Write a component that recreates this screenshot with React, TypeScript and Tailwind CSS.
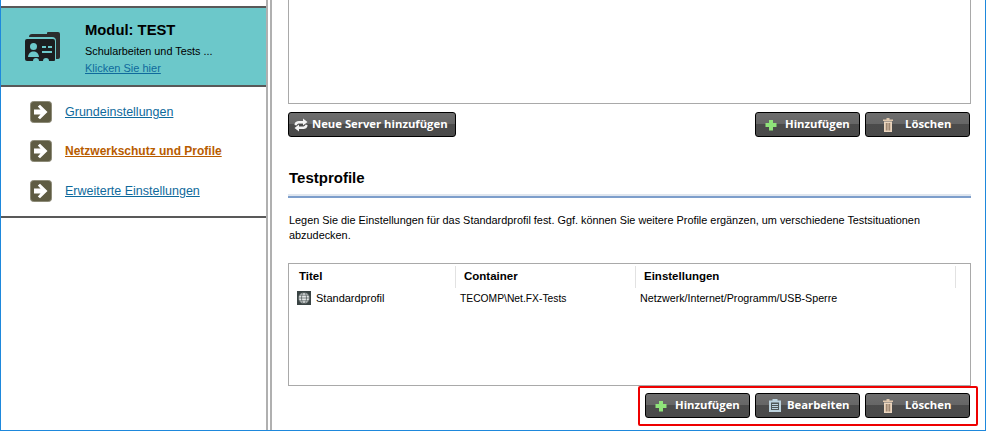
import type { ReactNode } from "react";

const sans = "font-['Liberation_Sans',Arial,sans-serif]";

function ArrowTile() {
  return (
    <svg width="22" height="22" viewBox="0 0 22 22" className="shrink-0">
      <rect x="0.5" y="0.5" width="21" height="21" rx="3" fill="#5f5c43" stroke="#8d8b78" />
      <path d="M4 8.500h6.500L7.800 5.600 10 3.800 17.500 11 10 18.200l-2.200-1.800 2.700-2.900H4z" fill="#fff" />
    </svg>
  );
}

function ModuleIcon() {
  return (
    <svg width="36" height="30" viewBox="0 0 36 30" className="shrink-0">
      <path d="M4 5a3 3 0 0 1 3-3h15V1a1 1 0 0 1 1-1h10a2 2 0 0 1 2 2v23a2 2 0 0 1-2 2h-2V9a4 4 0 0 0-4-4z" fill="#2b2d2e" />
      <path d="M2 7h26a2 2 0 0 1 2 2v19a1 1 0 0 1-1 1H24a3 3 0 0 0-6 0h-4a3 3 0 0 0-6 0H2a2 2 0 0 1-2-2V9a2 2 0 0 1 2-2z" fill="#1c1e20" />
      <circle cx="8.500" cy="14.500" r="3.500" fill="#6cc8ca" />
      <path d="M3 25c.5-4 2.700-5.500 5.500-5.500S13.500 21 14 25z" fill="#6cc8ca" />
      <path d="M17 14h4v2h-4zM23 14h4v2h-4zM17 19h10v2H17z" fill="#6cc8ca" />
    </svg>
  );
}

function PlusIcon() {
  return (
    <svg width="12" height="12" viewBox="0 0 12 12" className="shrink-0">
      <path d="M4 1h4v3h3.500v4H8v3.500H4V8H.5V4H4z" fill="#8fe37a" />
    </svg>
  );
}

function TrashIcon() {
  return (
    <svg width="10" height="14" viewBox="0 0 10 14" className="shrink-0">
      <path d="M3.500 0h3v1.500H10V3H0V1.500h3.500z" fill="#e0c8ae" />
      <path d="M1 3.500h8V14H1z" fill="#ecd6bf" />
      <path d="M2.800 5h1v7.500h-1zM4.500 5h1v7.500h-1zM6.200 5h1v7.500h-1z" fill="#8b735d" />
    </svg>
  );
}

function ClipboardIcon() {
  return (
    <svg width="12" height="13" viewBox="0 0 12 13" className="shrink-0">
      <path d="M0 1.500h3.500V0h5v1.500H12V13H0z" fill="#bcd3de" />
      <path d="M2 3.500h8V11H2z" fill="#4f5757" />
      <path d="M3 5h6v1H3zM3 7h6v1H3zM3 9h6v1H3z" fill="#bcd3de" />
    </svg>
  );
}

function RepeatIcon() {
  return (
    <svg width="14" height="14" viewBox="0 0 14 14" className="shrink-0">
      <path d="M.5 7C.5 4 2.500 3 5 3h4V.5L13.500 4 9 7.500V5.400H5.500C4 5.400 3 6 2.500 7.500z" fill="#f4f4f4" />
      <path d="M13.500 7c0 3-2 4-4.500 4H5v2.500L.5 10 5 6.500v2.100h3.500c1.500 0 2.500-.6 3-2.100z" fill="#f4f4f4" />
    </svg>
  );
}

function GlobeIcon() {
  return (
    <svg width="14" height="14" viewBox="0 0 14 14" className="shrink-0">
      <rect width="14" height="14" fill="#3a4444" />
      <circle cx="7" cy="7" r="5.500" fill="#e4e7e7" />
      <g fill="none" stroke="#4d5656" strokeWidth="0.7">
        <circle cx="7" cy="7" r="5.500" />
        <ellipse cx="7" cy="7" rx="2.500" ry="5.500" />
        <path d="M1.500 7h11M2.300 4.200h9.400M2.300 9.800h9.400" />
      </g>
    </svg>
  );
}

function ToolButton({ icon, label, className }: { icon: ReactNode; label: string; className: string }) {
  return (
    <button
      className={`flex h-[25px] items-center rounded-[3px] border border-black bg-[linear-gradient(#6e6e6e_0%,#666_48%,#4b4b4b_50%,#4a4a4a_100%)] font-['Open_Sans',sans-serif] text-[11.3px] font-bold whitespace-nowrap text-white ${className}`}
    >
      {icon}
      {label}
    </button>
  );
}

function NavLink({ label, active }: { label: string; active?: boolean }) {
  return (
    <div className="flex h-[39.5px] items-center pl-[29px]">
      <ArrowTile />
      <a className={`ml-[13px] underline ${active ? "text-[12px] font-bold text-[#b85c00]" : "mt-[2px] text-[12.5px] text-[#0f6a9c]"}`}>{label}</a>
    </div>
  );
}

export default function App() {
  return (
    <div className={`flex h-[431px] w-[986px] overflow-hidden border-x border-b border-[#1e88dc] bg-white text-black ${sans}`}>
      {/* Sidebar */}
      <aside className="h-full w-[265px] shrink-0 pt-[6px]">
        <div className="flex h-[81px] items-center border-y-2 border-[#595959] bg-[#6cc8ca] pl-[24px]">
          <ModuleIcon />
          <div className="ml-[24px] mt-[2px]">
            <div className="text-[14.8px] leading-[18px] font-bold">Modul: TEST</div>
            <div className="mt-[5px] text-[10.85px] leading-[14px]">Schularbeiten und Tests ...</div>
            <a className="mt-[3px] block text-[11px] leading-[14px] text-[#0f6a9c] underline">Klicken Sie hier</a>
          </div>
        </div>
        <nav className="flex h-[131px] flex-col justify-center border-b-2 border-[#595959] pb-[1px]">
          <NavLink label="Grundeinstellungen" />
          <NavLink label="Netzwerkschutz und Profile" active />
          <NavLink label="Erweiterte Einstellungen" />
        </nav>
      </aside>

      {/* Splitter */}
      <div className="h-full w-[6px] shrink-0 border-x-2 border-[#b0b0b0]" />

      {/* Main */}
      <main className="flex h-full min-w-0 flex-1 flex-col pl-[16px] pr-[14px]">
        <div className="h-[104px] shrink-0 border-x border-b border-[#a9a9a9]" />
        <div className="mt-[8px] flex items-center justify-between pr-px">
          <ToolButton icon={<RepeatIcon />} label="Neue Server hinzufügen" className="w-[168px] gap-[4px] pl-[5px]" />
          <div className="flex gap-[5px]">
            <ToolButton icon={<PlusIcon />} label="Hinzufügen" className="w-[105px] gap-[8px] pl-[9px]" />
            <ToolButton icon={<TrashIcon />} label="Löschen" className="w-[105px] gap-[12px] pl-[17px]" />
          </div>
        </div>

        <h2 className="mt-[32px] pl-px text-[15px] leading-[18px] font-bold">Testprofile</h2>
        <div className="mt-[7px] h-[4px] border-t-2 border-b-2 border-t-[#dfe6ef] border-b-[#7d9ecb]" />

        <p className="mt-[15px] pl-px text-[10.88px] leading-[15px]">
          Legen Sie die Einstellungen für das Standardprofil fest. Ggf. können Sie weitere Profile ergänzen, um verschiedene Testsituationen abzudecken.
        </p>

        <div className="mt-[20px] h-[123px] shrink-0 border border-[#a9a9a9]">
          <div className="mt-[2px] flex h-[22px] text-[11.5px] font-bold">
            <div className="w-[167px] border-r border-[#e2e2e2] pl-[10px] leading-[21px]">Titel</div>
            <div className="w-[180px] border-r border-[#e2e2e2] pl-[8px] leading-[21px]">Container</div>
            <div className="w-[320px] border-r border-[#e2e2e2] pl-[8px] leading-[21px]">Einstellungen</div>
          </div>
          <div className="mt-[1px] flex h-[18px] items-center text-[11px]">
            <div className="flex w-[166px] items-center gap-[5px] pl-[8px]">
              <GlobeIcon />
              Standardprofil
            </div>
            <div className="mt-[1px] w-[180px] pl-[5px] text-[10.3px]">TECOMP\Net.FX-Tests</div>
            <div className="pl-[5px] text-[10.7px]">Netzwerk/Internet/Programm/USB-Sperre</div>
          </div>
        </div>

        <div className="relative mt-[7px] flex justify-end gap-[5px] pr-px">
          <ToolButton icon={<PlusIcon />} label="Hinzufügen" className="w-[105px] gap-[8px] pl-[9px]" />
          <ToolButton icon={<ClipboardIcon />} label="Bearbeiten" className="w-[105px] gap-[6px] pl-[13px]" />
          <ToolButton icon={<TrashIcon />} label="Löschen" className="w-[105px] gap-[12px] pl-[17px]" />
          <div className="absolute top-[-7px] right-[-7px] h-[40px] w-[340px] rounded-[2px] border-2 border-[#ee0000]" />
        </div>
      </main>
    </div>
  );
}
